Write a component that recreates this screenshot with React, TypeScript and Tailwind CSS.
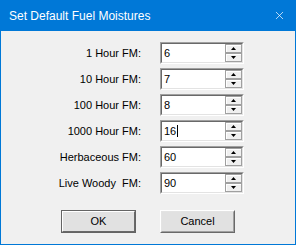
import { X } from "lucide-react";

type Row = { label: string; value: string; caret?: boolean };

const rows: Row[] = [
  { label: "1 Hour FM:", value: "6" },
  { label: "10 Hour FM:", value: "7" },
  { label: "100 Hour FM:", value: "8" },
  { label: "1000 Hour FM:", value: "16", caret: true },
  { label: "Herbaceous FM:", value: "60" },
  { label: "Live Woody  FM:", value: "90" },
];

function SpinButton({ up }: { up?: boolean }) {
  return (
    <div className="h-[9px] w-[17px] flex items-center justify-center bg-[#f0f0f0] border border-[#a0a0a0] shadow-[inset_1px_1px_0_#ffffff]">
      <svg width="5" height="3" viewBox="0 0 5 3">
        {up ? <path d="M2.5 0 L5 3 L0 3 Z" fill="#000" /> : <path d="M0 0 L5 0 L2.5 3 Z" fill="#000" />}
      </svg>
    </div>
  );
}

function SpinField({ value, caret }: { value: string; caret?: boolean }) {
  return (
    <div className="w-[84px] h-[22px] border-t border-l border-t-[#a0a0a0] border-l-[#a0a0a0] border-b border-r border-b-white border-r-white">
      <div className="h-full flex bg-white border-t border-l border-t-[#696969] border-l-[#696969] border-b border-r border-b-[#e3e3e3] border-r-[#e3e3e3]">
        <div className="flex-1 flex items-start pt-[2px] pl-[2px] text-[11px] leading-[14px] text-black">
          <span>{value}</span>
          {caret && <span className="ml-[1px] mt-[1px] w-px h-[12px] bg-black" />}
        </div>
        <div className="flex flex-col justify-between w-[17px]">
          <SpinButton up />
          <SpinButton />
        </div>
      </div>
    </div>
  );
}

function DialogButton({ label, isDefault }: { label: string; isDefault?: boolean }) {
  return (
    <div
      className={
        isDefault
          ? "w-[75px] h-[23px] border border-[#646464]"
          : "w-[75px] h-[23px] border-t border-l border-t-white border-l-white border-b border-r border-b-[#696969] border-r-[#696969]"
      }
    >
      <div
        className={
          isDefault
            ? "h-full flex items-center justify-center bg-[#e1e1e1] border-t border-l border-t-white border-l-white border-b border-r border-b-[#696969] border-r-[#696969] text-[11px]"
            : "h-full flex items-center justify-center bg-[#e1e1e1] border-t border-l border-t-[#e3e3e3] border-l-[#e3e3e3] border-b border-r border-b-[#a0a0a0] border-r-[#a0a0a0] text-[11px]"
        }
      >
        {label}
      </div>
    </div>
  );
}

export default function App() {
  return (
    <div
      className="w-[296px] h-[245px] bg-[#0078d7] flex flex-col"
      style={{ fontFamily: '"Liberation Sans", Arial, sans-serif' }}
    >
      <div className="h-[31px] flex items-center justify-between pl-[9px] pr-[10px] text-white text-[12px]">
        <span>Set Default Fuel Moistures</span>
        <X size={13} strokeWidth={1.3} className="text-white" />
      </div>
      <div className="flex-1 mx-px mb-px bg-[#f0f0f0] pt-[11px] flex flex-col">
        <div className="flex flex-col gap-[4px]">
          {rows.map((r) => (
            <div key={r.label} className="flex items-center">
              <div className="w-[140px] text-right text-[11px] text-black whitespace-pre">{r.label}</div>
              <div className="ml-[19px]">
                <SpinField value={r.value} caret={r.caret} />
              </div>
            </div>
          ))}
        </div>
        <div className="mt-[16px] flex justify-center gap-[24px]">
          <DialogButton label="OK" isDefault />
          <DialogButton label="Cancel" />
        </div>
      </div>
    </div>
  );
}
